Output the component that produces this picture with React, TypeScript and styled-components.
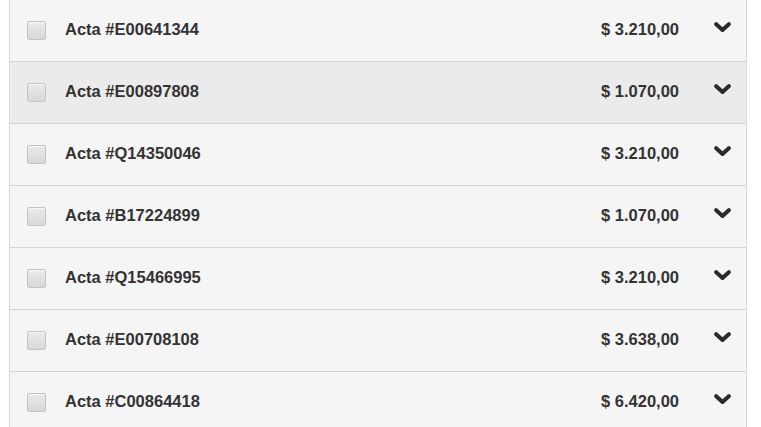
import React from 'react'
import styled, { createGlobalStyle } from 'styled-components'

const GlobalStyle = createGlobalStyle`
  body {
    margin: 0;
    background: #fff;
    font-family: 'Liberation Sans', Arial, sans-serif;
  }
`

const actas = [
  { code: 'E00641344', amount: '3.210,00' },
  { code: 'E00897808', amount: '1.070,00', hover: true },
  { code: 'Q14350046', amount: '3.210,00' },
  { code: 'B17224899', amount: '1.070,00' },
  { code: 'Q15466995', amount: '3.210,00' },
  { code: 'E00708108', amount: '3.638,00' },
  { code: 'C00864418', amount: '6.420,00' },
]

const Chevron = () => (
  <svg width="17" height="10" viewBox="0 0 17 10">
    <path d="M2.2 2.2 L8.5 8 L14.8 2.2" fill="none" stroke="#2b2b2b" strokeWidth="4" strokeLinecap="round" strokeLinejoin="miter" />
  </svg>
)

const ActasList = () => (
  <List>
    {actas.map((a) => (
      <Row key={a.code} hover={a.hover}>
        <Check />
        <Title>Acta #{a.code}</Title>
        <Amount>$ {a.amount}</Amount>
        <Toggle>
          <Chevron />
        </Toggle>
      </Row>
    ))}
  </List>
)

const App = () => (
  <>
    <GlobalStyle />
    <ActasList />
  </>
)

const List = styled.div`
  margin-left: 9px;
  width: 736px;
  border-left: 1px solid #dcdcdc;
  border-right: 1px solid #dcdcdc;
`

const Row = styled.div<{ hover?: boolean }>`
  display: flex;
  align-items: center;
  height: 61px;
  padding: 0 15px 0 17px;
  background: ${(p) => (p.hover ? '#ebebeb' : '#f5f5f5')};
  border-bottom: 1px solid #d4d4d4;
`

const Check = styled.span`
  width: 17px;
  height: 17px;
  margin-top: -1px;
  border: 1px solid #c4c4c4;
  border-radius: 2px;
  background: linear-gradient(#eaeaea, #d8d8d8);
  box-shadow: inset 0 1px 0 #f8f8f8;
`

const Title = styled.span`
  margin-left: 19px;
  margin-top: -2px;
  flex: 1;
  font-size: 16.5px;
  font-weight: bold;
  color: #333;
`

const Amount = styled.span`
  margin-top: -2px;
  font-size: 16.5px;
  font-weight: bold;
  color: #333;
`

const Toggle = styled.span`
  display: flex;
  margin-left: 35px;
  margin-bottom: 8px;
`

export default App
